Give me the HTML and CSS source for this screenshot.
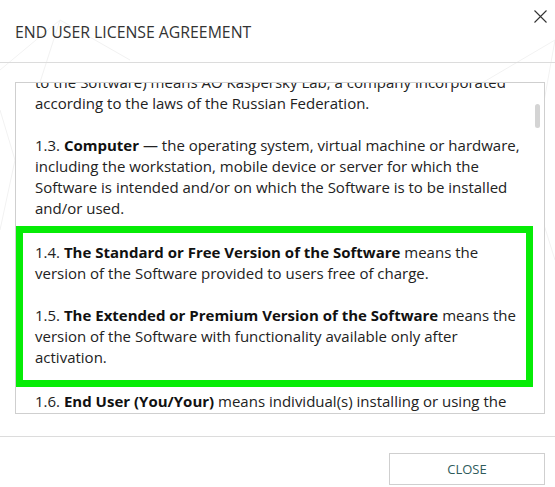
FILE: index.html
```html
<!DOCTYPE html>
<html lang="en">
<head>
<meta charset="utf-8">
<title>End User License Agreement</title>
<link rel="stylesheet" href="styles.css">
</head>
<body>
<div class="dialog">
  <svg class="bg-lines" width="555" height="487" viewBox="0 0 555 487" aria-hidden="true">
    <path d="M0 70 L60 20 L15 160 L0 110 M15 160 L0 230 M60 20 L130 60 M470 90 L555 40 L530 180 M530 180 L555 260 M470 90 L530 180" fill="none" stroke="#f2f2f2" stroke-width="1"/>
  </svg>
  <header class="dialog-header">
    <h1 class="dialog-title">END USER LICENSE AGREEMENT</h1>
    <button class="close-x" aria-label="Close">
      <svg width="13" height="13" viewBox="0 0 13 13"><path d="M0.5 0.5 L12.5 12.5 M12.5 0.5 L0.5 12.5" stroke="#333" stroke-width="1.1" fill="none"/></svg>
    </button>
  </header>
  <main class="dialog-body">
    <div class="doc-box">
      <div class="doc">
        <p>to the Software) means AO Kaspersky Lab, a company incorporated according to the laws of the Russian Federation.</p>
        <p>1.3. <b>Computer</b> — the operating system, virtual machine or hardware, including the workstation, mobile device or server for which the Software is intended and/or on which the Software is to be installed and/or used.</p>
        <div class="highlight">
          <p>1.4. <b>The Standard or Free Version of the Software</b> means the version of the Software provided to users free of charge.</p>
          <p>1.5. <b>The Extended or Premium Version of the Software</b> means the version of the Software with functionality available only after activation.</p>
        </div>
        <p>1.6. <b>End User (You/Your)</b> means individual(s) installing or using the Software on his or her own behalf or who is legally using a copy of the Software.</p>
      </div>
      <div class="scroll-thumb"></div>
    </div>
  </main>
  <footer class="dialog-footer">
    <button class="btn-close">CLOSE</button>
  </footer>
</div>
</body>
</html>
```

FILE: styles.css
```css
* { box-sizing: border-box; }

html, body {
  margin: 0;
  padding: 0;
  background: #fff;
}

body {
  font-family: "Open Sans", "Noto Sans", sans-serif;
  color: #222;
}

.dialog {
  position: relative;
  width: 555px;
  height: 487px;
  overflow: hidden;
  display: flex;
  flex-direction: column;
  background: #fff;
}

.bg-lines {
  position: absolute;
  left: 0;
  top: 0;
  z-index: 0;
}

.dialog-header,
.dialog-body,
.dialog-footer {
  position: relative;
  z-index: 1;
}

.dialog-header {
  height: 63px;
  border-bottom: 1px solid #dcdcdc;
  display: flex;
  align-items: flex-start;
  justify-content: space-between;
  padding: 0 8px 0 15px;
}

.dialog-title {
  margin: 22px 0 0;
  font-size: 15.8px;
  font-weight: 400;
  color: #333;
  letter-spacing: 0;
  line-height: 20px;
}

.close-x {
  margin-top: 10px;
  padding: 0;
  border: 0;
  background: none;
  width: 13px;
  height: 13px;
  display: flex;
}

.dialog-body {
  padding: 19px 10px 0 15px;
}

.doc-box {
  position: relative;
  height: 332px;
  border: 1px solid #cfcfcf;
  background: #fff;
  overflow: hidden;
}

.doc {
  margin-top: -11.5px;
  font-size: 15px;
  line-height: 21px;
  color: #222;
}

.doc p {
  margin: 0 0 21px;
  padding: 0 19px;
}

.doc b {
  font-weight: 700;
  color: #111;
}

.highlight {
  margin: -13.5px 11px 3.5px 0;
  border: 7px solid #06ec06;
  padding: 8.5px 0 12.5px 0;
}

.highlight p {
  padding: 0 1px 0 12px;
}

.highlight p:last-child {
  margin-bottom: 0;
}

.scroll-thumb {
  position: absolute;
  right: 4px;
  top: 21px;
  width: 5px;
  height: 24px;
  border-radius: 3px;
  background: #d4d4d4;
}

.dialog-footer {
  margin-top: 22px;
  border-top: 1px solid #dcdcdc;
  display: flex;
  justify-content: flex-end;
  padding: 16px 10px 0 0;
}

.btn-close {
  width: 156px;
  height: 32px;
  border: 1px solid #cfcfcf;
  background: #fff;
  font-family: "Open Sans", "Noto Sans", sans-serif;
  font-size: 13px;
  color: #2f5b5b;
  letter-spacing: 0;
  padding: 0;
}
```
